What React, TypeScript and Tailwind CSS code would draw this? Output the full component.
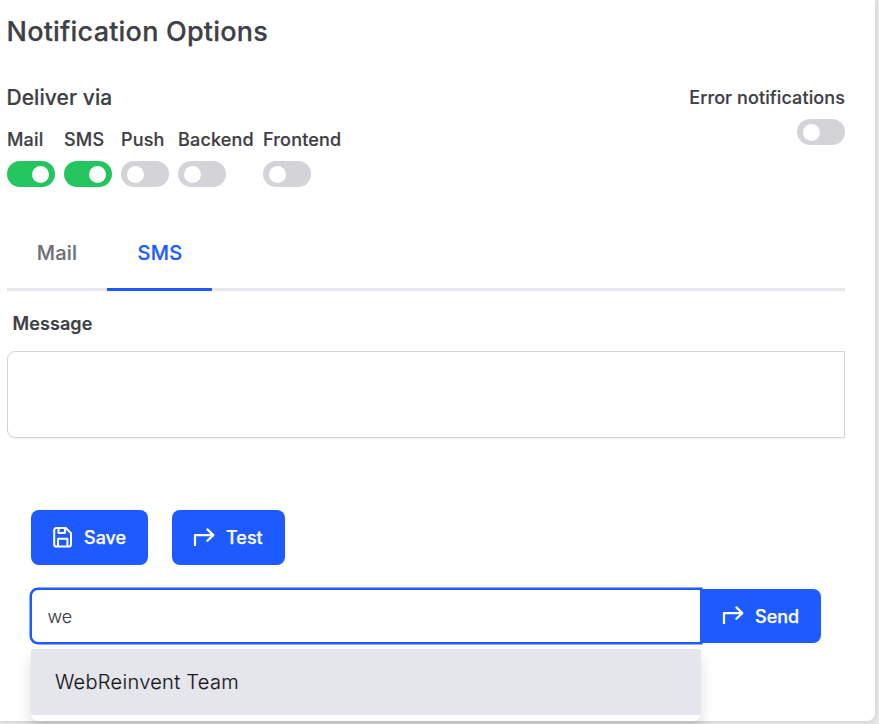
import React from "react";

type Channel = { label: string; on: boolean; width: string };

const channels: Channel[] = [
  { label: "Mail", on: true, width: "w-12" },
  { label: "SMS", on: true, width: "w-12" },
  { label: "Push", on: false, width: "w-12" },
  { label: "Backend", on: false, width: "w-[76px]" },
  { label: "Frontend", on: false, width: "w-20" },
];

function Toggle({ on = false }: { on?: boolean }) {
  return (
    <button
      role="switch"
      aria-checked={on}
      className={`flex h-[26px] w-12 items-center rounded-full ${
        on ? "justify-end bg-[#22c55e] pr-[6.5px]" : "justify-start bg-[#d4d4d8] pl-[6px]"
      }`}
    >
      <span className="size-[17px] rounded-full bg-white" />
    </button>
  );
}

function SaveIcon() {
  return (
    <svg width="20" height="21" viewBox="0 0 20 21" fill="none" stroke="currentColor" strokeWidth="2" strokeLinejoin="round">
      <path d="M3.3 1H12.7L18 6.2V17.5A2.1 2.1 0 0 1 15.9 19.6H3.3A2.1 2.1 0 0 1 1.2 17.5V3.1A2.1 2.1 0 0 1 3.3 1Z" />
      <path d="M5.5 1.5V6H11.9V1.5M5 19.5V11.7H14.4V19.5" />
    </svg>
  );
}

function ForwardIcon() {
  return (
    <svg width="22" height="20" viewBox="0 0 22 20" fill="none" stroke="currentColor" strokeWidth="2.2" strokeLinejoin="round">
      <path d="M2 18V7.1H20.3" />
      <path d="M14.4 1.4L20.3 7.1L14.4 12.8" strokeLinecap="round" />
    </svg>
  );
}

export default function App() {
  return (
    <div className="h-[724px] w-[879px] overflow-hidden bg-[#e8e8e8] font-['Inter',sans-serif] text-[#3f3f46]">
      <main className="h-[721px] w-[875px] rounded-br-lg bg-white pl-[7px] pr-[30px] pt-[13px] shadow-[0_1px_6px_rgba(0,0,0,0.12)]">
        <h1 className="-ml-[0.5px] h-[72px] text-[27px] font-medium leading-[38px] tracking-[0.21px] [-webkit-text-stroke:0.25px]">Notification Options</h1>

        <section className="flex h-[144px] justify-between">
          <div>
            <h2 className="-ml-[0.5px] h-[45px] text-[21px] font-medium leading-[26px] tracking-[0.06px] [-webkit-text-stroke:0.2px]">Deliver via</h2>
            <div className="flex gap-[9px]">
              {channels.map((c) => (
                <div key={c.label} className={c.width}>
                  <div className="mb-[7px] h-6 whitespace-nowrap text-[18px] font-medium leading-[20px] tracking-[0.18px] [-webkit-text-stroke:0.2px]">{c.label}</div>
                  <Toggle on={c.on} />
                </div>
              ))}
            </div>
          </div>
          <div className="flex flex-col items-end">
            <div className="h-[34px] text-[18px] font-medium leading-[26px] tracking-[0.1px] [-webkit-text-stroke:0.2px]">Error notifications</div>
            <Toggle />
          </div>
        </section>

        <nav className="flex h-[62px] border-b-3 border-[#e5e7eb] text-[20px] font-medium leading-[48px] tracking-[0.25px] [-webkit-text-stroke:0.2px]">
          <button className="h-[62px] w-[100px] pb-[14px] text-[#71717a]">Mail</button>
          <button className="h-[62px] w-[105px] border-b-3 border-[#1d5aff] pb-[11px] pl-px text-[#1d5aff]">SMS</button>
        </nav>

        <label className="block h-[60px] pl-[5.5px] pt-5 text-[18px] font-semibold leading-[26px] tracking-[0.1px] [-webkit-text-stroke:0.15px]">Message</label>
        <textarea className="block h-[87px] w-[838px] resize-none rounded-l-lg border border-[#d4d4d8] shadow-[0_1px_2px_rgba(0,0,0,0.05)] outline-none" />

        <div className="mt-[72px] px-6">
          <div className="flex gap-6 text-[18px] font-medium text-white [-webkit-text-stroke:0.25px]">
            <button className="flex h-[55px] w-[117px] items-center rounded-lg bg-[#1d5aff] pl-[22px]">
              <SaveIcon />
              <span className="ml-[11px]">Save</span>
            </button>
            <button className="flex h-[55px] w-[113px] items-center rounded-lg bg-[#1d5aff] pl-[21px]">
              <ForwardIcon />
              <span className="ml-[11px]">Test</span>
            </button>
          </div>

          <div className="mt-[23px] flex h-[56px] items-center">
            <div className="-ml-px h-[56px] w-[672px] shrink-0">
              <input
                defaultValue="we"
                className="block h-[56px] w-full rounded-l-lg border-2 border-[#1d5aff] bg-white pl-[15.5px] text-[18px] font-light text-[#3f3f46] shadow-[0_0_0_0.5px_#1d5aff] outline-none [-webkit-text-stroke:0.15px]"
              />
            </div>
            <button className="relative -ml-px flex h-[54px] w-[120px] items-center rounded-r-lg bg-[#1d5aff] pl-[21px] text-[18px] font-medium text-white shadow-[0_1px_2px_rgba(0,0,0,0.05)] [-webkit-text-stroke:0.25px]">
              <ForwardIcon />
              <span className="ml-[11px]">Send</span>
            </button>
          </div>

          <div className="relative mt-[5px] h-[72px] w-[670px] rounded-lg bg-white shadow-[0_8px_14px_rgba(0,0,0,0.14)]">
            <div className="flex h-[66px] items-center rounded-[2px] bg-[#e5e6eb] pl-6 text-[20px] font-light tracking-[0.3px] text-[#18181b] [-webkit-text-stroke:0.15px]">
              WebReinvent Team
            </div>
          </div>
        </div>
      </main>
    </div>
  );
}
